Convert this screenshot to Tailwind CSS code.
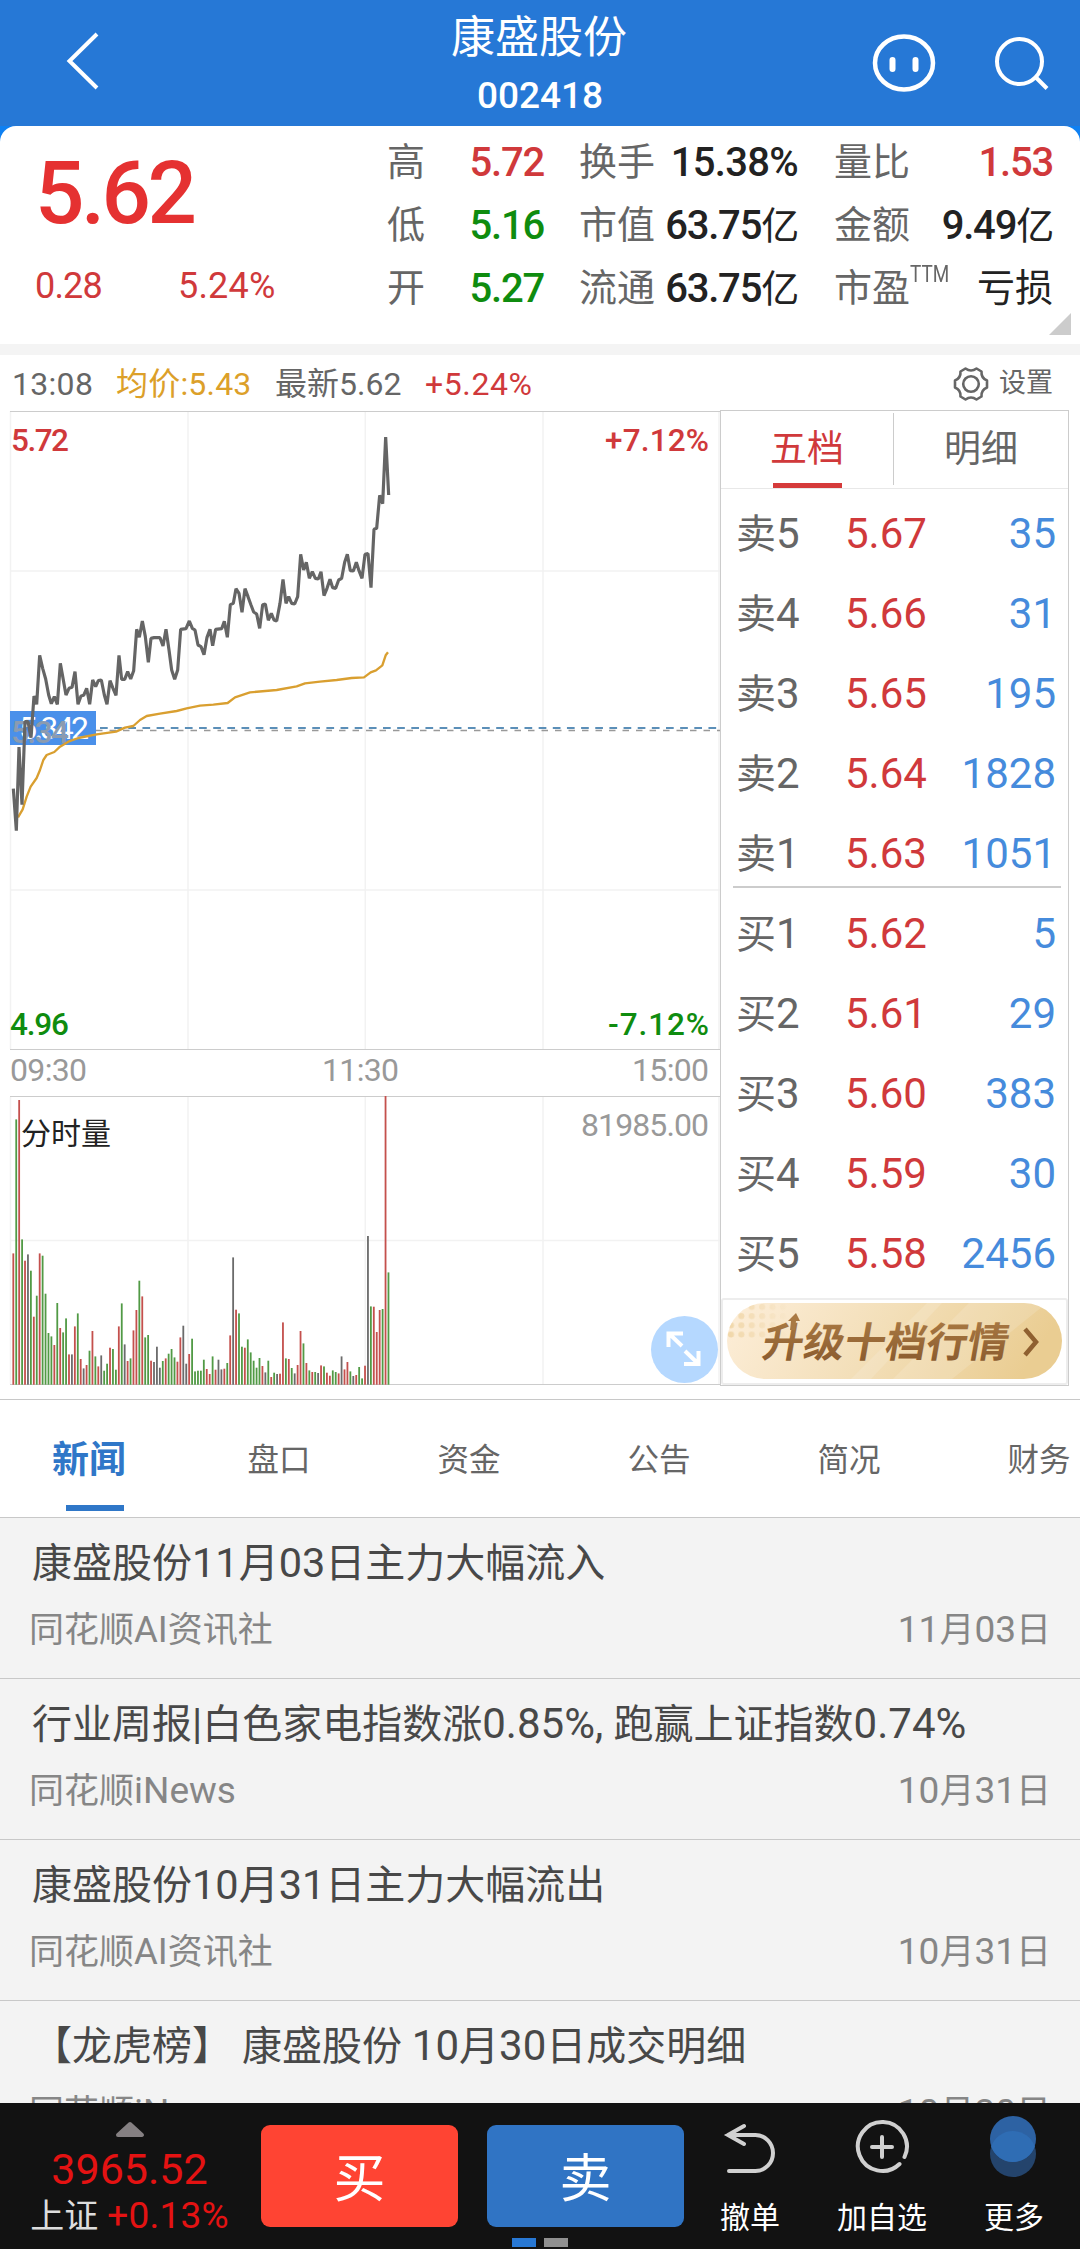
<!DOCTYPE html>
<html lang="zh-CN">
<head>
<meta charset="utf-8">
<title>康盛股份 002418</title>
<script src="https://cdn.jsdelivr.net/npm/@tailwindcss/browser@4"></script>
</head>
<body class="w-[1080px] h-[2249px] overflow-hidden bg-white font-[Roboto,'Noto_Sans_CJK_SC',sans-serif] text-[#666] flex flex-col whitespace-nowrap">

<!-- Title bar -->
<header class="h-[126px] shrink-0 bg-[#2678d6] grid grid-cols-3 text-white">
  <div class="pl-[66px] pt-[31px]">
    <svg width="36" height="60" viewBox="0 0 36 60" fill="none" stroke="#fff" stroke-width="4"><path d="M31 3 L3.500 30 L31 57"/></svg>
  </div>
  <div class="flex flex-col items-center pt-[8px]">
    <h1 class="text-[44px] leading-[60px] h-[60px] mr-[2px]">康盛股份</h1>
    <div class="text-[37px] leading-[56px] font-medium">002418</div>
  </div>
  <div class="flex justify-end items-start pr-[31px] pt-[33px]">
    <svg width="64" height="60" viewBox="0 0 64 60" fill="none" stroke="#fff"><ellipse cx="32" cy="30" rx="29" ry="26.500" stroke-width="4.500"/><path d="M20.500 27v9M43.500 27v9" stroke-width="6" stroke-linecap="round"/></svg>
    <svg class="ml-[57px] mt-[1px]" width="56" height="58" viewBox="0 0 56 58" fill="none" stroke="#fff" stroke-width="4"><circle cx="26.500" cy="27.500" r="22.500"/><path d="M42 42.500 L54 54.500"/></svg>
  </div>
</header>

<!-- Quote summary -->
<section class="h-[218px] shrink-0 bg-[#0f80f2]">
  <div class="h-full rounded-t-[16px] bg-white flex relative">
    <div class="w-[387px] pl-[35px] pt-[21px] text-[#e53131]">
      <div class="text-[87px] leading-[92px] font-medium tracking-[-3.500px]">5.62</div>
      <div class="flex mt-[23px] text-[36px] leading-[48px] text-[#d0393b]"><span class="w-[143px] tracking-[-0.800px]">0.28</span><span class="tracking-[0.200px]">5.24%</span></div>
    </div>
    <div class="w-[157px] pt-[5px] text-[38px]">
      <div class="flex justify-between h-[63px] items-center"><span>高</span><span class="text-[40px] font-medium tracking-[-1.200px] text-[#d0393b]">5.72</span></div>
      <div class="flex justify-between h-[63px] items-center"><span>低</span><span class="text-[40px] font-medium tracking-[-1.200px] text-[#0f8c0f]">5.16</span></div>
      <div class="flex justify-between h-[63px] items-center"><span>开</span><span class="text-[40px] font-medium tracking-[-1.200px] text-[#0f8c0f]">5.27</span></div>
    </div>
    <div class="w-[219px] ml-[35px] pt-[5px] text-[38px]">
      <div class="flex justify-between h-[63px] items-center"><span>换手</span><span class="text-[40px] font-medium tracking-[-0.700px] text-[#222]">15.38%</span></div>
      <div class="flex justify-between h-[63px] items-center"><span>市值</span><span class="text-[40px] font-medium tracking-[-1.200px] text-[#222]">63.75<span class="text-[38px] font-normal">亿</span></span></div>
      <div class="flex justify-between h-[63px] items-center"><span>流通</span><span class="text-[40px] font-medium tracking-[-1.200px] text-[#222]">63.75<span class="text-[38px] font-normal">亿</span></span></div>
    </div>
    <div class="w-[219px] ml-[36px] pt-[5px] text-[38px]">
      <div class="flex justify-between h-[63px] items-center"><span>量比</span><span class="text-[40px] font-medium tracking-[-1.200px] text-[#d0393b]">1.53</span></div>
      <div class="flex justify-between h-[63px] items-center"><span>金额</span><span class="text-[40px] font-medium tracking-[-1.200px] text-[#222]">9.49<span class="text-[38px] font-normal">亿</span></span></div>
      <div class="flex h-[63px] items-center"><span>市盈</span><span class="text-[21px] leading-[24px] mb-[30px] scale-x-90 scale-y-110 origin-left">TTM</span><span class="ml-auto text-[38px] text-[#222]">亏损</span></div>
    </div>
    <svg class="absolute right-[9px] bottom-[9px]" width="22" height="22"><path d="M22 0V22H0Z" fill="#ccc"/></svg>
  </div>
</section>
<div class="h-[11px] shrink-0 bg-[#f4f4f4]"></div>

<!-- Latest tick line -->
<div class="h-[55px] shrink-0 flex items-center pt-[2px] pl-[12px] pr-[27px] text-[32px]">
  <span class="w-[104px] tracking-[0.300px]">13:08</span>
  <span class="w-[159px] tracking-[0.200px] text-[#dca029]">均价:5.43</span>
  <span class="w-[150px]">最新5.62</span>
  <span class="text-[#d0393b] tracking-[0.600px]">+5.24%</span>
  <svg class="ml-auto mr-[10px]" width="36" height="36" viewBox="-18 -18 36 36" fill="none" stroke="#666" stroke-width="2.600" stroke-linejoin="round"><path d="M-5.500 -15.500 Q0 -11.500 5.500 -15.500 L10.500 -12.500 Q10 -6 16 -3.500 L16 3.500 Q10 6 10.500 12.500 L5.500 15.500 Q0 11.500 -5.500 15.500 L-10.500 12.500 Q-10 6 -16 3.500 L-16 -3.500 Q-10 -6 -10.500 -12.500Z"/><circle r="7.800"/></svg>
  <span class="text-[27px]">设置</span>
</div>

<!-- Chart and order book -->
<section class="h-[989px] shrink-0 flex">
  <div class="w-[720px] relative">
    <svg class="block" width="720" height="989" viewBox="0 410 720 989">
      <g fill="none" stroke="#f2f2f2" stroke-width="1.500">
        <path d="M10.500 411V1049M188 411V1049M365.300 411V1049M543 411V1049M719 411V1049M10 571H720M10 890H720"/>
        <path d="M10.500 1097V1384M188 1097V1384M365.300 1097V1384M543 1097V1384M719 1097V1384M10 1240.500H720"/>
      </g>
      <path d="M10 411.500H720M10 1049.500H720M10 1096.500H720M10 1384.500H720" stroke="#ccc"/>
      <path d="M96 730.500H720" stroke="#999" stroke-width="1.500" stroke-dasharray="6.500 7"/>
      <path d="M100 728H720" stroke="#5b8fb8" stroke-width="2" stroke-dasharray="7.700 6.450"/>
      <rect x="10" y="711" width="86" height="34" fill="#4a90ea"/>
      <text x="19" y="739" font-size="32" fill="#fff" textLength="70">5.342</text>
      <text x="11" y="743" font-size="32" fill="#8b9bb0" font-weight="500" textLength="58">5.34</text>
      <g transform="translate(0 400) scale(.333333)" fill="none">
        <path stroke="#d99f30" stroke-width="7" stroke-linejoin="round" d="M54 1252L68 1228 80 1190 92 1160 110 1134 120 1110 130 1080 140 1065 163 1056 180 1040 205 1025 235 1014 290 1003 348 995 375 983 400 978 420 960 440 948 480 941 530 933 560 925 600 917 640 914 683 909 705 892 750 877 830 870 890 859 915 850 960 845 1010 840 1055 834 1092 832 1112 817 1128 811 1147 796 1157 766 1164 757"/>
        <path stroke="#656565" stroke-width="9.500" stroke-linejoin="bevel" d="M40 1166L49 1292 57 1041 66 1214 75 965 84 965 93 1013 102 888 110 913 119 766 128 805 137 837 146 885 154 911 163 890 172 913 181 790 190 840 198 885 207 865 216 862 225 815 234 913 243 888 251 886 260 865 269 913 278 840 287 860 295 842 304 840 313 885 321 913 330 842 339 865 348 886 357 766 365 838 374 838 383 815 392 837 401 812 410 688 418 712 427 663 436 710 445 787 453 715 462 713 480 713 489 738 498 688 507 750 515 810 524 838 533 810 542 688 558 686 568 663 577 685 585 690 594 735 603 740 612 764 621 712 630 688 638 737 647 688 665 686 673 664 682 712 691 614 700 610 708 566 717 580 726 637 735 566 744 590 753 615 761 636 770 642 779 685 788 614 796 612 805 661 814 640 822 660 830 663 840 610 849 538 858 610 866 590 875 610 884 612 893 590 902 463 911 510 919 487 928 535 937 515 946 535 955 537 963 515 972 587 981 565 990 538 998 563 1007 565 1016 540 1025 535 1034 487 1042 463 1051 512 1060 513 1069 487 1077 512 1086 535 1095 463 1104 461 1113 563 1122 388 1130 385 1139 286 1148 311 1157 111 1166 285"/>
      </g>
      <g id="volume"></g>
      <g font-size="31.500" font-weight="500">
        <text x="11" y="451" fill="#d0393b" textLength="58">5.72</text>
        <text x="605" y="451" fill="#d0393b" textLength="104">+7.12%</text>
        <text x="10" y="1035" fill="#0f8c0f" textLength="59">4.96</text>
        <text x="608" y="1035" fill="#0f8c0f" textLength="101">-7.12%</text>
      </g>
      <g font-size="32" fill="#999">
        <text x="10" y="1081" textLength="77">09:30</text>
        <text x="322" y="1081" textLength="77">11:30</text>
        <text x="632" y="1081" textLength="77">15:00</text>
        <text x="581" y="1136" textLength="128">81985.00</text>
      </g>
      <text x="21" y="1144" font-size="30" fill="#222">分时量</text>
      <circle cx="684.500" cy="1349.500" r="33.500" fill="#b5d8ff"/>
      <path d="M682 1346L669 1333.500M668.500 1347V1333.500H683M685 1351L698 1363.500M698.500 1351V1364H684" fill="none" stroke="#fff" stroke-width="4"/>
    </svg>
  </div>

  <div class="w-[349px] h-[976px] border border-[#ccc] flex flex-col">
    <div class="h-[78px] shrink-0 flex border-b border-[#e8e8e8] text-[37px] relative">
      <div class="w-[172px] flex justify-center text-[#d0393b] leading-[78px]"><div class="border-b-[5px] border-[#d53a3a] w-[69px] h-[77px] flex justify-center">五档</div></div>
      <div class="flex-1 h-[72px] mt-[2px] border-l border-[#ccc] text-center leading-[74px]">明细</div>
    </div>
    <div id="asks" class="pl-[15px] pr-[12px] pt-[4px]"></div>
    <div class="h-[2px] bg-[#ccc] ml-[12px] mr-[7px] -mt-[7px] mb-[5px] shrink-0"></div>
    <div id="bids" class="pl-[15px] pr-[12px]"></div>
    <div class="mt-auto h-[87px] shrink-0 border-[2px] border-[#ededed] rounded-[3px] pl-[4px] pt-[3px]">
      <svg width="335" height="77" viewBox="0 0 335 77">
        <defs>
          <linearGradient id="gold" x2="1" y2=".15"><stop stop-color="#fdeed9"/><stop offset=".5" stop-color="#f3dfb9"/><stop offset="1" stop-color="#eacd92"/></linearGradient>
          <linearGradient id="ink" x2="0" y2="1"><stop stop-color="#a97943"/><stop offset="1" stop-color="#87582c"/></linearGradient>
          <pattern id="dots" width="10.400" height="9.200" patternUnits="userSpaceOnUse"><circle cx="4" cy="4" r="3" fill="#f0d6a8"/></pattern>
          <linearGradient id="fade"><stop stop-color="#fff"/><stop offset="1" stop-color="#000"/></linearGradient>
          <mask id="dotfade"><rect width="64" height="37" fill="url(#fade)"/></mask>
          <clipPath id="pill"><rect width="335" height="76" rx="38"/></clipPath>
        </defs>
        <g clip-path="url(#pill)">
          <rect width="335" height="76" fill="url(#gold)"/>
          <rect width="64" height="37" fill="url(#dots)" mask="url(#dotfade)"/>
          <path d="M124 76L200 0H215L144 76Z M166 76L242 0H320L225 76Z" fill="#fff" fill-opacity=".14"/>
        </g>
        <text x="34" y="54" font-size="41" font-weight="700" fill="url(#ink)" transform="translate(9 0) skewX(-10)" textLength="246">升级十档行情</text>
        <path d="M61 18L69 10L73 18ZM64 18H69L68 27H63Z" fill="#a97943"/>
        <path d="M298 26L309 39L298 52" fill="none" stroke="#8f6030" stroke-width="4.500"/>
      </svg>
    </div>
  </div>
</section>

<!-- Content tabs -->
<nav class="h-[119px] shrink-0 border-t border-b border-[#c8c8c8] text-[31.500px] flex overflow-hidden">
  <div class="w-[184px] shrink-0 flex flex-col items-center text-[37px] font-bold text-[#2f77c8] pr-[6px]"><span class="h-[105px] leading-[122px]">新闻</span><span class="w-[58px] h-[6px] bg-[#2f77c8] ml-[12px]"></span></div>
  <div class="w-[190px] shrink-0 text-center leading-[121px]">盘口</div>
  <div class="w-[190px] shrink-0 text-center leading-[121px]">资金</div>
  <div class="w-[190px] shrink-0 text-center leading-[121px]">公告</div>
  <div class="w-[190px] shrink-0 text-center leading-[121px]">简况</div>
  <div class="w-[190px] shrink-0 text-center leading-[121px]">财务</div>
</nav>

<!-- News list -->
<main class="h-[585px] shrink-0 overflow-hidden bg-[#f3f3f3] text-[#484848]">
  <article class="h-[161px] border-b border-[#c8c8c8] pt-[15px] pl-[29px] pr-[29px]">
    <h2 class="text-[40px] leading-[60px] h-[60px] pl-[3px]">康盛股份<span class="text-[41.500px]">11</span>月<span class="text-[41.500px]">03</span>日主力大幅流入</h2>
    <div class="flex justify-between text-[35px] leading-[48px] h-[48px] mt-[13px] text-[#868686]"><span>同花顺<span class="text-[36.500px]">AI</span>资讯社</span><span><span class="text-[37px]">11</span>月<span class="text-[37px]">03</span>日</span></div>
  </article>
  <article class="h-[161px] border-b border-[#c8c8c8] pt-[15px] pl-[29px] pr-[29px]">
    <h2 class="text-[40px] leading-[60px] h-[60px] pl-[3px]">行业周报<span class="text-[42px]">|</span>白色家电指数涨<span class="text-[42px]">0.85%, </span>跑赢上证指数<span class="text-[42px]">0.74%</span></h2>
    <div class="flex justify-between text-[35px] leading-[48px] h-[48px] mt-[13px] text-[#868686]"><span>同花顺<span class="text-[37px]">iNews</span></span><span><span class="text-[37px]">10</span>月<span class="text-[37px]">31</span>日</span></div>
  </article>
  <article class="h-[161px] border-b border-[#c8c8c8] pt-[15px] pl-[29px] pr-[29px]">
    <h2 class="text-[40px] leading-[60px] h-[60px] pl-[3px]">康盛股份<span class="text-[41.500px]">10</span>月<span class="text-[41.500px]">31</span>日主力大幅流出</h2>
    <div class="flex justify-between text-[35px] leading-[48px] h-[48px] mt-[13px] text-[#868686]"><span>同花顺<span class="text-[36.500px]">AI</span>资讯社</span><span><span class="text-[37px]">10</span>月<span class="text-[37px]">31</span>日</span></div>
  </article>
  <article class="h-[161px] pt-[15px] pl-[29px] pr-[29px]">
    <h2 class="text-[40px] leading-[60px] h-[60px] pl-[3px]">【龙虎榜】 康盛股份 <span class="text-[42px]">10</span>月<span class="text-[42px]">30</span>日成交明细</h2>
    <div class="flex justify-between text-[35px] leading-[48px] h-[48px] mt-[13px] text-[#868686]"><span>同花顺<span class="text-[37px]">iNews</span></span><span><span class="text-[37px]">10</span>月<span class="text-[37px]">30</span>日</span></div>
  </article>
</main>

<!-- Bottom trade bar -->
<footer class="h-[146px] shrink-0 bg-[#121212] flex relative text-white">
  <div class="w-[261px] flex flex-col items-center pt-[18px] pr-[2px] text-[#e41212]">
    <svg width="30" height="17"><path d="M3 14L15 3L27 14Z" fill="#858082" stroke="#858082" stroke-width="4" stroke-linejoin="round"/></svg>
    <div class="text-[43px] leading-[50px] mt-[6px]">3965.52</div>
    <div class="text-[37px] leading-[44px]"><span class="text-[34px] text-[#ddd]">上证</span><span class="ml-[9px] tracking-[0.200px]">+0.13%</span></div>
  </div>
  <div class="w-[197px] h-[102px] mt-[22px] rounded-[9px] bg-[#ff4433] text-[52px] leading-[109px] text-center">买</div>
  <div class="w-[197px] h-[102px] mt-[22px] ml-[29px] rounded-[9px] bg-[#3074c4] text-[52px] leading-[109px] text-center">卖</div>
  <div class="w-[132px] flex flex-col items-center text-[30px] leading-[40px]">
    <svg class="mt-[14px] mb-[21px]" width="60" height="60" viewBox="0 0 60 60" fill="none" stroke="#d0d0d0" stroke-width="4" stroke-linecap="round"><path d="M24 9L8 18L24 27M8 18H35.500A17.500 18 0 0 1 35.500 54H9"/></svg>
    <span>撤单</span>
  </div>
  <div class="w-[132px] flex flex-col items-center text-[30px] leading-[40px]">
    <svg class="mt-[14px] mb-[21px]" width="60" height="60" viewBox="0 0 60 60" fill="none" stroke="#d0d0d0" stroke-width="4" stroke-linecap="round"><path d="M52.500 40A24.500 24.500 0 1 0 47.500 47M30 20V40M20 30H40"/></svg>
    <span>加自选</span>
  </div>
  <div class="w-[132px] flex flex-col items-center text-[30px] leading-[40px]">
    <svg class="mt-[9px] mb-[21px]" width="60" height="65" viewBox="0 0 60 65"><circle cx="29" cy="42" r="23" fill="#24446c"/><circle cx="29" cy="27" r="23" fill="#2d62a3"/><path d="M7.300 34.500A23 23 0 0 1 50.700 34.500A23 23 0 0 1 7.300 34.500Z" fill="#2f6db4"/></svg>
    <span>更多</span>
  </div>
  <div class="absolute left-[512px] bottom-[2px] flex gap-[8px]"><i class="w-[24px] h-[9px] bg-[#2878d4]"></i><i class="w-[24px] h-[9px] bg-[#909090]"></i></div>
</footer>

<script>
  // Per-minute volume: bar top in thirds of a pixel, then colour (r up, g down, k flat)
  const base = 1034;
  const tops = "640r 238g 180r 598g 662r 643k 692g 830r 767g 640r 647g 761g 879g 889g 915r 789g 864r 877g 835g 943r 943k 859r 820g 957r 985k 975r 932g 873r 949g 979r 946k 992g 971g 923r 927g 989g 859r 790g 913k 963r 955g 871r 810r 722g 769r 892g 885g 962r 966k 920k 983k 963g 955r 941g 927g 952g 965r 892r 857k 971k 942r 896g 994g 992g 992g 959g 987r 1002r 949g 989r 959k 988k 986r 969g 886r 652k 809r 820g 920g 923r 898g 937g 962g 983g 954g 978r 997k 962g 1011r 998g 1002k 1001r 847r 955g 957r 984g 1000k 975r 873r 910g 969r 991g 996r 996g 999k 976r 979g 998r 1007r 991g 996g 1000r 949k 988r 966r 994g 1008k 1005r 981g 1015g 977r 588k 799g 800r 876r 810r 807g 168r 697g".split(" ");
  const tone = { r: "#c4504d", g: "#519a45", k: "#6b6b6b" };
  document.getElementById("volume").innerHTML = tops.map((t, i) => {
    const top = parseInt(t), h = (base - top) / 3;
    return `<rect x="${(12.4 + i * 2.931).toFixed(2)}" y="${(1384.7 - h).toFixed(1)}" width="1.8" height="${h.toFixed(1)}" fill="${tone[t.slice(-1)]}"/>`;
  }).join("");

  const row = ([n, p, v]) => `<div class="h-[80px] flex items-center text-[42px]"><span class="w-[109px]"><span class="text-[40px]">${n[0]}</span>${n[1]}</span><span class="text-[#d0393b]">${p}</span><span class="ml-auto text-[#468bdc]">${v}</span></div>`;
  document.getElementById("asks").innerHTML = [["卖5","5.67",35],["卖4","5.66",31],["卖3","5.65",195],["卖2","5.64",1828],["卖1","5.63",1051]].map(row).join("");
  document.getElementById("bids").innerHTML = [["买1","5.62",5],["买2","5.61",29],["买3","5.60",383],["买4","5.59",30],["买5","5.58",2456]].map(row).join("");
</script>
</body>
</html>
